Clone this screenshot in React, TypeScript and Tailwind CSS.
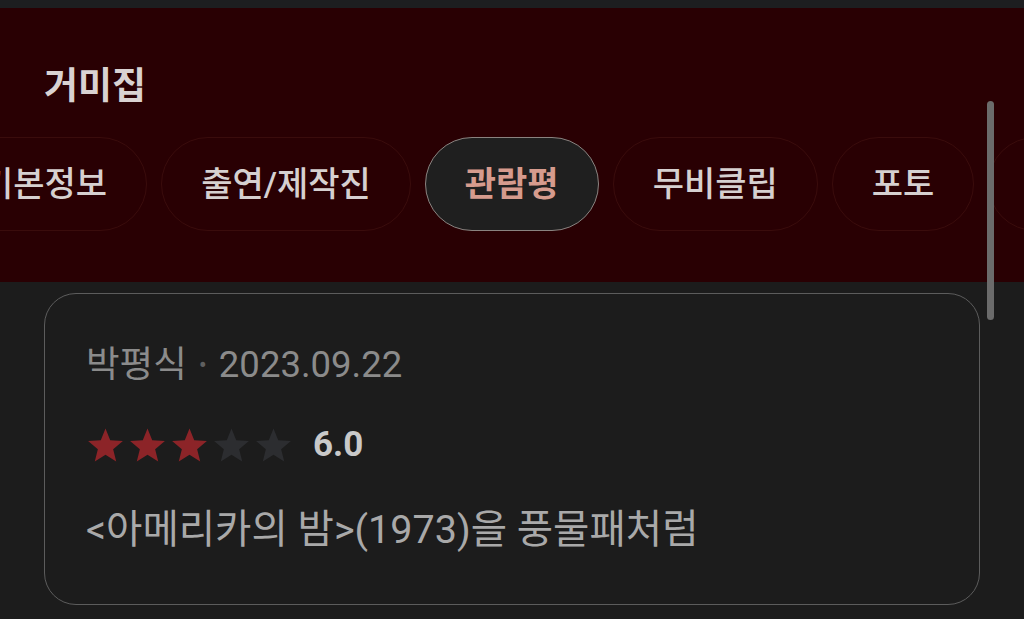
import type { ReactNode } from 'react'

const tabs = ['기본정보', '출연/제작진', '관람평', '무비클립', '포토', '관련영화']

function Star({ filled }: { filled: boolean }) {
  return (
    <svg width="39" height="39" viewBox="0 0 24 24" className="shrink-0">
      <polygon
        points="12,1.5 14.9,8.8 22.7,9.3 16.7,14.3 18.6,21.9 12,17.7 5.4,21.9 7.3,14.3 1.3,9.3 9.1,8.8"
        fill={filled ? '#8c2428' : '#2c2d30'}
      />
    </svg>
  )
}

function Pill({ active, children }: { active?: boolean; children: ReactNode }) {
  return (
    <div
      className={
        active
          ? 'shrink-0 h-[94px] px-[39px] rounded-full flex items-center bg-[#1f1f1f] border border-[#8a8380] text-[#d69b8d] font-bold'
          : 'shrink-0 h-[94px] px-[39px] rounded-full flex items-center border border-[#3a0c0c] text-[#d6d0d0] font-medium'
      }
    >
      <span className="text-[34px] leading-none whitespace-nowrap">{children}</span>
    </div>
  )
}

export default function App() {
  return (
    <div
      className="relative w-[1024px] h-[619px] overflow-hidden bg-[#1c1c1c]"
      style={{ fontFamily: 'Roboto, "Noto Sans CJK KR", sans-serif' }}
    >
      <div className="h-[8px] bg-[#1d1e20]" />

      {/* header */}
      <div className="h-[274px] bg-[#290003]">
        <h1 className="pt-[58px] pl-[44px] h-[97px] text-[37px] leading-[42px] font-bold text-[#d9d2d2]">거미집</h1>
        <div className="mt-[32px] flex gap-[14px] ml-[-58px]">
          {tabs.map(t => (
            <Pill key={t} active={t === '관람평'}>{t}</Pill>
          ))}
        </div>
      </div>

      {/* review card */}
      <div className="mt-[11px] ml-[44px] w-[936px] h-[312px] rounded-[32px] border border-[#5c5c5c] bg-[#1c1c1c] px-[41px] pt-[51px]">
        <div className="flex items-center h-[40px] text-[36.5px] text-[#8b8b8b]">
          <span>박평식</span>
          <span className="mx-[12px] text-[#5f5f5f] text-[24px]">•</span>
          <span>2023.09.22</span>
        </div>
        <div className="mt-[40px] flex items-center h-[40px]">
          <div className="flex gap-[3px]">
            <Star filled />
            <Star filled />
            <Star filled />
            <Star filled={false} />
            <Star filled={false} />
          </div>
          <span className="ml-[20px] text-[35px] font-bold text-[#c9c9c9]">6.0</span>
        </div>
        <p className="mt-[43px] h-[44px] leading-[44px] text-[39.5px] text-[#a9a9a9] whitespace-nowrap">
          &lt;아메리카의 밤&gt;(1973)을 풍물패처럼
        </p>
      </div>

      {/* scrollbar */}
      <div className="absolute left-[987px] top-[101px] w-[7px] h-[219px] rounded-full bg-[#6b6b6b]" />
    </div>
  )
}
